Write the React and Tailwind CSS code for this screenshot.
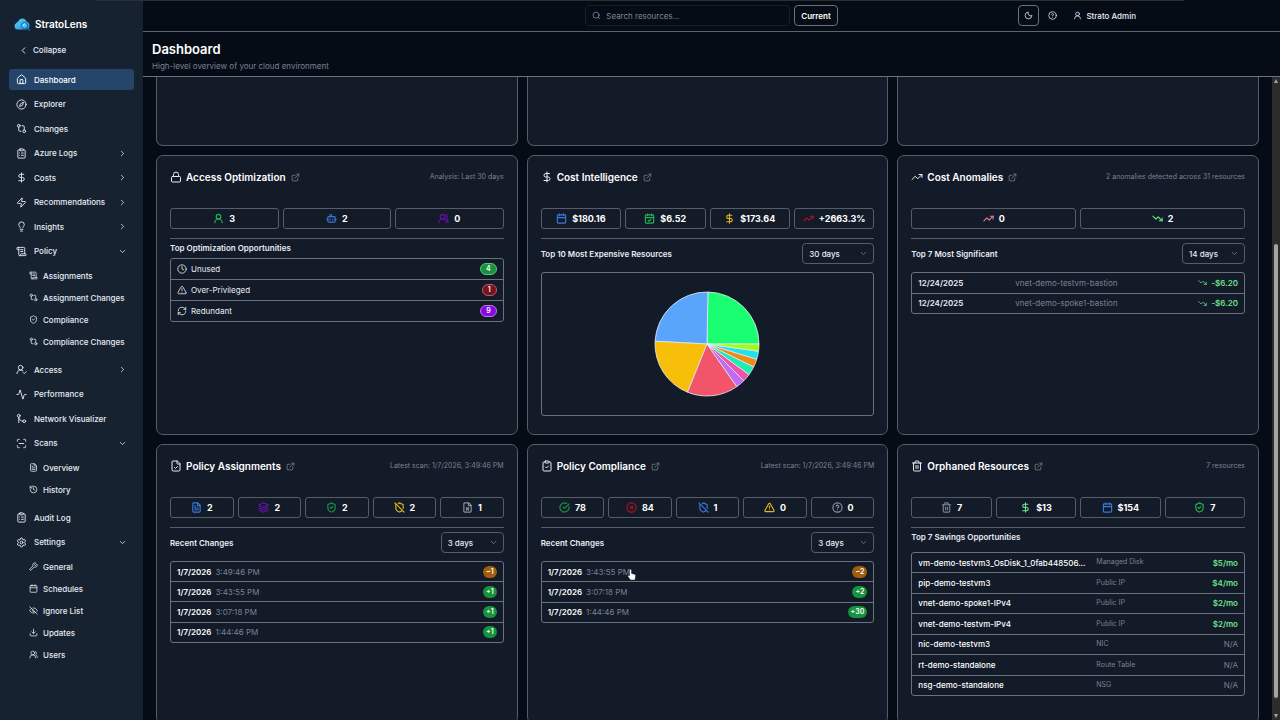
import {
  Activity, Bot, Calendar, CalendarCheck, ChevronDown, ChevronLeft, ChevronRight, CircleCheckBig,
  CircleQuestionMark, CircleX, ClipboardCheck, ClipboardList, Clock, Compass, DollarSign, Download,
  ExternalLink, EyeOff, FileCheck, FileText, FileX, GitCompare, GitMerge, History, House, Layers,
  Lightbulb, Lock, Moon, RefreshCw, ScanLine, ScrollText, Search, Settings, ShieldCheck, ShieldOff,
  Trash2, TrendingDown, TrendingUp, TriangleAlert, UserRound, UserRoundCheck, UsersRound, Wrench, Zap,
} from 'lucide-react';

const navItems = [
  { label: 'Dashboard', icon: House, active: true },
  { label: 'Explorer', icon: Compass },
  { label: 'Changes', icon: GitCompare },
  { label: 'Azure Logs', icon: ClipboardList, expandable: true },
  { label: 'Costs', icon: DollarSign, expandable: true },
  { label: 'Recommendations', icon: Zap, expandable: true },
  { label: 'Insights', icon: Lightbulb, expandable: true },
  {
    label: 'Policy',
    icon: ScrollText,
    children: [
      { label: 'Assignments', icon: ScrollText },
      { label: 'Assignment Changes', icon: GitCompare },
      { label: 'Compliance', icon: ShieldCheck },
      { label: 'Compliance Changes', icon: GitCompare },
    ],
  },
  { label: 'Access', icon: UserRoundCheck, expandable: true },
  { label: 'Performance', icon: Activity },
  { label: 'Network Visualizer', icon: GitMerge },
  {
    label: 'Scans',
    icon: ScanLine,
    children: [
      { label: 'Overview', icon: FileText },
      { label: 'History', icon: History },
    ],
  },
  { label: 'Audit Log', icon: ClipboardList },
  {
    label: 'Settings',
    icon: Settings,
    children: [
      { label: 'General', icon: Wrench },
      { label: 'Schedules', icon: Calendar },
      { label: 'Ignore List', icon: EyeOff },
      { label: 'Updates', icon: Download },
      { label: 'Users', icon: UsersRound },
    ],
  },
];

const opportunities = [
  { label: 'Unused', icon: Clock, count: 4, badge: 'bg-[#16933c] border-[#5fc07e]' },
  { label: 'Over-Privileged', icon: TriangleAlert, count: 1, badge: 'bg-[#7a121d] border-[#b0606a]' },
  { label: 'Redundant', icon: RefreshCw, count: 9, badge: 'bg-[#8a08e0] border-[#b878e6]' },
];

const anomalies = [
  { date: '12/24/2025', resource: 'vnet-demo-testvm-bastion', delta: '-$6.20' },
  { date: '12/24/2025', resource: 'vnet-demo-spoke1-bastion', delta: '-$6.20' },
];

const assignmentChanges = [
  { date: '1/7/2026', time: '3:49:46 PM', diff: '~1' },
  { date: '1/7/2026', time: '3:43:55 PM', diff: '+1' },
  { date: '1/7/2026', time: '3:07:18 PM', diff: '+1' },
  { date: '1/7/2026', time: '1:44:46 PM', diff: '+1' },
];

const complianceChanges = [
  { date: '1/7/2026', time: '3:43:55 PM', diff: '~2' },
  { date: '1/7/2026', time: '3:07:18 PM', diff: '+2' },
  { date: '1/7/2026', time: '1:44:46 PM', diff: '+30' },
];

const orphans = [
  { name: 'vm-demo-testvm3_OsDisk_1_0fab448506...', type: 'Managed Disk', cost: '$5/mo' },
  { name: 'pip-demo-testvm3', type: 'Public IP', cost: '$4/mo' },
  { name: 'vnet-demo-spoke1-IPv4', type: 'Public IP', cost: '$2/mo' },
  { name: 'vnet-demo-testvm-IPv4', type: 'Public IP', cost: '$2/mo' },
  { name: 'nic-demo-testvm3', type: 'NIC', cost: null },
  { name: 'rt-demo-standalone', type: 'Route Table', cost: null },
  { name: 'nsg-demo-standalone', type: 'NSG', cost: null },
];

// end angle of each slice in degrees, counter-clockwise from 3 o'clock
const slices = [
  { end: 89, color: '#1aff72' },
  { end: 177, color: '#59a5fb' },
  { end: 248, color: '#f7be0a' },
  { end: 305, color: '#f25469' },
  { end: 315, color: '#bf6bf2' },
  { end: 324, color: '#ef53ae' },
  { end: 334, color: '#1fecb0' },
  { end: 343, color: '#f28a12' },
  { end: 352, color: '#1de3ea' },
  { end: 360, color: '#a3fb1c' },
];

function Logo() {
  return (
    <svg width="18" height="14" viewBox="0 0 36 28" aria-hidden="true">
      <defs>
        <linearGradient id="cloud" x1="0" y1="0" x2="1" y2="1">
          <stop offset="0" stopColor="#5fd6fb" />
          <stop offset="1" stopColor="#1c8fd8" />
        </linearGradient>
      </defs>
      <path d="M8 25a7 7 0 0 1-1-13C8 9 10 9 11 9 12 2 24 0 27 9c4 1 6 4 6 8 0 5-3 8-8 8Z" fill="url(#cloud)" />
      <circle cx="23" cy="17" r="6" fill="#4fc3f5" stroke="#0f5f9c" strokeWidth="2" />
      <path d="M20 17a3 3 0 0 1 3-3" stroke="#c9f2ff" strokeWidth="2" fill="none" strokeLinecap="round" />
      <path d="m28 22 5 4" stroke="#1673b4" strokeWidth="3" strokeLinecap="round" />
    </svg>
  );
}

function Sidebar() {
  return (
    <aside className="flex w-[143px] shrink-0 flex-col bg-[#172231] px-[9px] pb-[51px] text-[#e6ebf1]">
      <div className="flex items-center gap-1 pt-[17px] pl-1">
        <Logo />
        <span className="text-[10px] leading-[14px] font-semibold text-white">StratoLens</span>
      </div>
      <button type="button" className="mt-2 mb-2 flex h-[22px] items-center gap-1 pl-[9px] text-[8px] font-medium">
        <ChevronLeft size={11} />
        Collapse
      </button>
      <nav className="flex max-h-[600px] flex-1 flex-col justify-between">
        {navItems.map((item) => (
          <div key={item.label}>
            <a
              href="#"
              className={
                item.active
                  ? 'flex h-[21px] items-center rounded-[3px] bg-[#25446a] px-[7px] text-[8px] font-medium text-white'
                  : 'flex h-[21px] items-center rounded-[3px] px-[7px] text-[8px] font-medium'
              }
            >
              <item.icon size={11} className="mr-[7px]" />
              {item.label}
              {item.expandable && <ChevronRight size={9} className="ml-auto" />}
              {item.children && <ChevronDown size={9} className="ml-auto" />}
            </a>
            {item.children && (
              <ul className="mt-[5px] flex flex-col gap-1 pb-[5px] pl-5">
                {item.children.map((child) => (
                  <li key={child.label}>
                    <a href="#" className="flex h-[18px] items-center gap-[5px] text-[8px] font-medium whitespace-nowrap">
                      <child.icon size={9} />
                      {child.label}
                    </a>
                  </li>
                ))}
              </ul>
            )}
          </div>
        ))}
      </nav>
    </aside>
  );
}

function TopBar() {
  return (
    <header className="grid h-8 shrink-0 grid-cols-[1fr_auto_1fr] items-center border-b border-[#5d646f]">
      <span />
      <div className="flex gap-1">
        <label className="flex h-[21px] w-[205px] items-center gap-[5px] rounded-[4px] border border-[#171e29] px-[6px]">
          <Search size={9} className="shrink-0 text-[#8b93a1]" />
          <input
            type="text"
            aria-label="Search resources"
            placeholder="Search resources..."
            className="w-full min-w-0 bg-transparent text-[8px] outline-none placeholder:text-[#7d8593]"
          />
        </label>
        <button type="button" className="h-[21px] rounded-[4px] border border-[#6b727d] px-[6px] text-[8px] font-semibold text-white">
          Current
        </button>
      </div>
      <div className="flex items-center justify-end pr-36">
        <button type="button" aria-label="Toggle theme" className="flex h-[21px] w-[21px] items-center justify-center rounded-[4px] border border-[#6b727d]">
          <Moon size={9} />
        </button>
        <button type="button" aria-label="Help" className="ml-[9px]">
          <CircleQuestionMark size={9} />
        </button>
        <button type="button" className="ml-4 flex items-center gap-1 text-[8px] font-medium">
          <UserRound size={9} />
          Strato Admin
        </button>
      </div>
    </header>
  );
}

function Card({ icon: Icon, title, note, children }) {
  return (
    <section className="flex h-[280px] flex-col rounded-[7px] border border-[#565c68] bg-[#131a28] px-[13px]">
      <div className="mt-[13px] flex h-4 items-center">
        <Icon size={12} className="mr-1" />
        <h2 className="text-[10px] font-semibold text-white">{title}</h2>
        <a href="#" aria-label={`Open ${title}`} className="ml-[5px] text-[#7d8593]">
          <ExternalLink size={9} />
        </a>
        {note && <span className="ml-auto text-[7px] text-[#7b8294]">{note}</span>}
      </div>
      {children}
    </section>
  );
}

function Stats({ items }) {
  return (
    <div className="mt-[23px] flex gap-1 border-b border-[#565c68] pb-[9px]">
      {items.map(({ icon: Icon, value, color }, i) => (
        <div key={i} className="flex h-[21px] flex-1 basis-0 items-center justify-center gap-[5px] rounded-[3px] border border-[#565c68] text-[9px] font-bold text-white">
          <Icon size={11} strokeWidth={2.5} className={color} />
          {value}
        </div>
      ))}
    </div>
  );
}

function RangeHeader({ id, title, value, width = 'w-[63px]' }) {
  return (
    <div className="mt-1 mb-2 flex h-[21px] items-center justify-between">
      <label htmlFor={id} className="text-[8px] font-semibold">{title}</label>
      <div className="relative flex items-center">
        <select id={id} className={`h-[21px] appearance-none rounded-[4px] border border-[#565c68] bg-[#131a28] pl-[6px] text-[8px] font-medium ${width}`}>
          <option>{value}</option>
        </select>
        <ChevronDown size={9} className="pointer-events-none absolute right-[6px] text-[#7d8593]" />
      </div>
    </div>
  );
}

function Box({ height, children }) {
  return <div className={`overflow-hidden rounded-[3px] border border-[#6b727d] ${height}`}>{children}</div>;
}

function ChangesTable({ rows, height }) {
  return (
    <Box height={height}>
      <table className="h-full w-full text-[8px]">
        <tbody className="divide-y divide-[#6b727d]">
          {rows.map((row) => (
            <tr key={row.time}>
              <td className="pl-[6px] font-semibold text-white">
                {row.date}
                <span className="ml-1 font-normal text-[#7b8294]">{row.time}</span>
              </td>
              <td className="pr-[6px]">
                <span
                  className={
                    row.diff[0] === '~'
                      ? 'ml-auto block h-3 w-fit rounded-full bg-[#a05e0d] px-[3px] text-[7px] leading-3 font-semibold text-white'
                      : 'ml-auto block h-3 w-fit rounded-full bg-[#16933c] px-[3px] text-[7px] leading-3 font-semibold text-white'
                  }
                >
                  {row.diff}
                </span>
              </td>
            </tr>
          ))}
        </tbody>
      </table>
    </Box>
  );
}

function PieChart() {
  const point = (deg) => {
    const rad = (deg * Math.PI) / 180;
    return `${52 * Math.cos(rad)} ${-52 * Math.sin(rad)}`;
  };
  return (
    <svg width="106" height="106" viewBox="-53 -53 106 106" role="img" aria-label="Most expensive resources">
      {slices.map((slice, i) => {
        const start = i ? slices[i - 1].end : 0;
        return (
          <path
            key={slice.color}
            d={`M0 0L${point(start)}A52 52 0 0 0 ${point(slice.end)}Z`}
            fill={slice.color}
            stroke="#e8edf5"
            strokeWidth="0.8"
            strokeLinejoin="round"
          />
        );
      })}
    </svg>
  );
}

function HandCursor() {
  return (
    <svg width="9" height="12" viewBox="0 0 18 24" className="absolute top-2 left-[86px]" aria-hidden="true">
      <path
        d="M5 2.500a2 2 0 0 1 4 0V9l6 1.500c2 .5 2.500 1.500 2 4L16 22H7L2 15c-1-1.500.5-3 2-2l1 1Z"
        fill="#fff"
        stroke="#20242c"
        strokeWidth="1"
      />
    </svg>
  );
}

function Scrollbar() {
  return (
    <div className="flex w-2 shrink-0 flex-col items-center bg-[#2c2c2c] py-[2px] text-[#a3a3a3]" aria-hidden="true">
      <svg width="4" height="4" viewBox="0 0 4 4"><path d="M2 0 4 4H0Z" fill="currentColor" /></svg>
      <div className="mt-[161px] mb-4 w-1 flex-1 rounded-full bg-[#a3a3a3]" />
      <svg width="4" height="4" viewBox="0 0 4 4"><path d="M0 0h4L2 4Z" fill="currentColor" /></svg>
    </div>
  );
}

export default function App() {
  return (
    <div className="relative flex h-screen overflow-hidden bg-[#060c16] font-[Inter,sans-serif] text-[#e9edf3]">
      <div className="absolute top-0 right-24 left-24 h-px bg-[#2a302e]" />
      <Sidebar />
      <div className="flex min-w-0 flex-1 flex-col">
        <TopBar />
        <div className="h-[45px] shrink-0 border-b border-[#6b727d] pt-2 pl-[9px]">
          <h1 className="text-[13px] leading-[18px] font-semibold text-white">Dashboard</h1>
          <p className="mt-[2px] text-[8px] leading-3 text-[#7b8294]">High-level overview of your cloud environment</p>
        </div>

        <div className="flex min-h-0 flex-1">
          <main className="grid flex-1 auto-rows-max grid-cols-3 gap-[9px] overflow-hidden pr-[13px] pl-[13px]">
            {/* Tail of the row above */}
            {[0, 1, 2].map((i) => (
              <div key={i} className="h-[69px] rounded-b-[7px] border border-t-0 border-[#565c68] bg-[#131a28]" />
            ))}

            <Card icon={Lock} title="Access Optimization" note="Analysis: Last 30 days">
              <Stats
                items={[
                  { icon: UserRound, value: '3', color: 'text-[#22b455]' },
                  { icon: Bot, value: '2', color: 'text-[#3a78d8]' },
                  { icon: UsersRound, value: '0', color: 'text-[#6a0fb0]' },
                ]}
              />
              <h3 className="mt-[3px] mb-1 text-[8px] leading-3 font-semibold">Top Optimization Opportunities</h3>
              <Box height="h-[64px]">
                <ul className="flex h-full flex-col divide-y divide-[#6b727d]">
                  {opportunities.map(({ label, icon: Icon, count, badge }) => (
                    <li key={label} className="flex flex-1 items-center px-[6px] text-[8px]">
                      <Icon size={10} className="mr-1" />
                      {label}
                      <span className={`ml-auto h-3 rounded-full border px-[5px] text-[7px] leading-[10px] font-semibold text-white ${badge}`}>
                        {count}
                      </span>
                    </li>
                  ))}
                </ul>
              </Box>
            </Card>

            <Card icon={DollarSign} title="Cost Intelligence">
              <Stats
                items={[
                  { icon: Calendar, value: '$180.16', color: 'text-[#3a78d8]' },
                  { icon: CalendarCheck, value: '$6.52', color: 'text-[#22b455]' },
                  { icon: DollarSign, value: '$173.64', color: 'text-[#e0b81c]' },
                  { icon: TrendingUp, value: '+2663.3%', color: 'text-[#b01222]' },
                ]}
              />
              <RangeHeader id="cost-range" title="Top 10 Most Expensive Resources" value="30 days" width="w-[72px]" />
              <Box height="h-[144px]">
                <div className="flex h-full items-center justify-center">
                  <PieChart />
                </div>
              </Box>
            </Card>

            <Card icon={TrendingUp} title="Cost Anomalies" note="2 anomalies detected across 31 resources">
              <Stats
                items={[
                  { icon: TrendingUp, value: '0', color: 'text-[#e0808a]' },
                  { icon: TrendingDown, value: '2', color: 'text-[#6ee08c]' },
                ]}
              />
              <RangeHeader id="anomaly-range" title="Top 7 Most Significant" value="14 days" />
              <Box height="h-[42px]">
                <table className="h-full w-full table-fixed text-[8px]">
                  <tbody className="divide-y divide-[#6b727d]">
                    {anomalies.map((row) => (
                      <tr key={row.resource}>
                        <td className="w-[103px] pl-[6px] font-semibold">{row.date}</td>
                        <td className="text-[#7b8294]">{row.resource}</td>
                        <td className="pr-[6px] font-semibold text-[#6ee08c]">
                          <span className="flex items-center justify-end gap-1">
                            <TrendingDown size={9} />
                            {row.delta}
                          </span>
                        </td>
                      </tr>
                    ))}
                  </tbody>
                </table>
              </Box>
            </Card>

            <Card icon={FileCheck} title="Policy Assignments" note="Latest scan: 1/7/2026, 3:49:46 PM">
              <Stats
                items={[
                  { icon: FileText, value: '2', color: 'text-[#3a78d8]' },
                  { icon: Layers, value: '2', color: 'text-[#6a0fb0]' },
                  { icon: ShieldCheck, value: '2', color: 'text-[#1c9146]' },
                  { icon: ShieldOff, value: '2', color: 'text-[#e0b81c]' },
                  { icon: FileX, value: '1', color: 'text-[#8b93a1]' },
                ]}
              />
              <RangeHeader id="assignment-range" title="Recent Changes" value="3 days" />
              <ChangesTable rows={assignmentChanges} height="h-[82px]" />
            </Card>

            <Card icon={ClipboardCheck} title="Policy Compliance" note="Latest scan: 1/7/2026, 3:49:46 PM">
              <Stats
                items={[
                  { icon: CircleCheckBig, value: '78', color: 'text-[#1c9146]' },
                  { icon: CircleX, value: '84', color: 'text-[#b01222]' },
                  { icon: ShieldOff, value: '1', color: 'text-[#3a78d8]' },
                  { icon: TriangleAlert, value: '0', color: 'text-[#e0b81c]' },
                  { icon: CircleQuestionMark, value: '0', color: 'text-[#8b93a1]' },
                ]}
              />
              <RangeHeader id="compliance-range" title="Recent Changes" value="3 days" />
              <div className="relative">
                <ChangesTable rows={complianceChanges} height="h-[62px]" />
                <HandCursor />
              </div>
            </Card>

            <Card icon={Trash2} title="Orphaned Resources" note="7 resources">
              <Stats
                items={[
                  { icon: Trash2, value: '7', color: 'text-[#7b8294]' },
                  { icon: DollarSign, value: '$13', color: 'text-[#6ee08c]' },
                  { icon: Calendar, value: '$154', color: 'text-[#3a78d8]' },
                  { icon: ShieldCheck, value: '7', color: 'text-[#22b455]' },
                ]}
              />
              <h3 className="mt-[3px] mb-[9px] text-[8px] leading-3 font-semibold">Top 7 Savings Opportunities</h3>
              <Box height="h-[144px]">
                <table className="h-full w-full table-fixed text-[8px]">
                  <tbody className="divide-y divide-[#6b727d]">
                    {orphans.map((row) => (
                      <tr key={row.name}>
                        <td className="w-[184px] pl-[6px] font-medium whitespace-nowrap text-white">{row.name}</td>
                        <td className="text-[7px] text-[#7b8294]">{row.type}</td>
                        <td className="pr-[6px] text-right">
                          {row.cost ? (
                            <span className="font-semibold text-[#6ee08c]">{row.cost}</span>
                          ) : (
                            <span className="text-[#7b8294]">N/A</span>
                          )}
                        </td>
                      </tr>
                    ))}
                  </tbody>
                </table>
              </Box>
            </Card>
          </main>
          <Scrollbar />
        </div>
      </div>
    </div>
  );
}
